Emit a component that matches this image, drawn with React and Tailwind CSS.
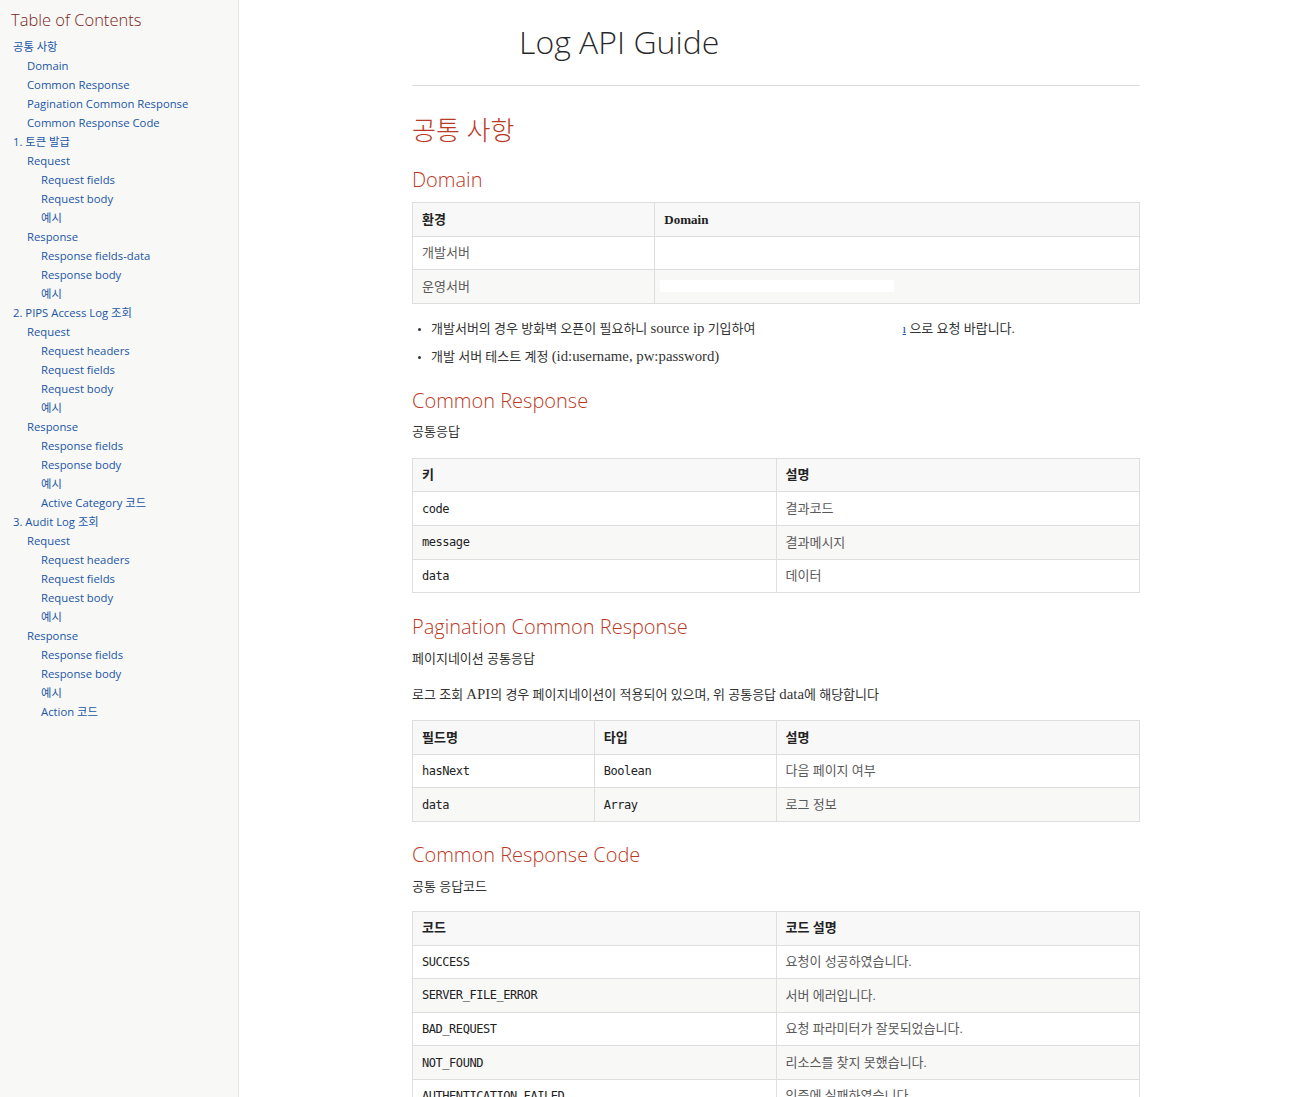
import React from "react"

const toc = [
  [1, "공통 사항"],
  [2, "Domain"],
  [2, "Common Response"],
  [2, "Pagination Common Response"],
  [2, "Common Response Code"],
  [1, "1. 토큰 발급"],
  [2, "Request"],
  [3, "Request fields"],
  [3, "Request body"],
  [3, "예시"],
  [2, "Response"],
  [3, "Response fields-data"],
  [3, "Response body"],
  [3, "예시"],
  [1, "2. PIPS Access Log 조회"],
  [2, "Request"],
  [3, "Request headers"],
  [3, "Request fields"],
  [3, "Request body"],
  [3, "예시"],
  [2, "Response"],
  [3, "Response fields"],
  [3, "Response body"],
  [3, "예시"],
  [3, "Active Category 코드"],
  [1, "3. Audit Log 조회"],
  [2, "Request"],
  [3, "Request headers"],
  [3, "Request fields"],
  [3, "Request body"],
  [3, "예시"],
  [2, "Response"],
  [3, "Response fields"],
  [3, "Response body"],
  [3, "예시"],
  [3, "Action 코드"],
]

const indent = { 1: "pl-[2px]", 2: "pl-[16px]", 3: "pl-[30px]" }

const sans = "font-['Open_Sans','Noto_Sans_CJK_KR',sans-serif]"
const serif = "font-['Liberation_Serif','Noto_Sans_CJK_KR',serif]"
const mono = "font-['DejaVu_Sans_Mono',monospace]"

// latin runs inside korean body text are set a touch larger, like the original serif
function L({ children }) {
  return <span className="text-[14.8px]">{children}</span>
}

function H3({ children, className = "" }) {
  return (
    <h3 className={`${sans} font-light text-[20px] leading-[28px] text-[#ba3925] ${className}`}>
      {children}
    </h3>
  )
}

const thCls = `${serif} h-[33.6px] px-[9px] text-left text-[13px] font-bold text-[#222] border border-[#dedede]`
const tdText = `${serif} h-[33.6px] px-[9px] text-[13px] text-[#5a5a5a] border border-[#dedede]`
const tdCode = `${mono} h-[33.6px] px-[9px] text-[12px] tracking-[-0.45px] text-[#222] border border-[#dedede]`

function Table({ head, rows, cols, codeCols = [0] }) {
  return (
    <table className="w-full border-collapse border border-[#dedede] table-fixed">
      <colgroup>
        {cols.map((w, i) => (
          <col key={i} className={w} />
        ))}
      </colgroup>
      <thead>
        <tr className="bg-[#f7f8f7]">
          {head.map((h, i) => (
            <th key={i} className={thCls}>
              {h}
            </th>
          ))}
        </tr>
      </thead>
      <tbody>
        {rows.map((r, ri) => (
          <tr key={ri} className={ri % 2 === 1 ? "bg-[#f8f8f7]" : "bg-white"}>
            {r.map((c, ci) => (
              <td key={ci} className={codeCols.includes(ci) ? tdCode : tdText}>
                {c}
              </td>
            ))}
          </tr>
        ))}
      </tbody>
    </table>
  )
}

export default function App() {
  return (
    <div className="flex h-[1097px] overflow-hidden bg-white">
      {/* sidebar toc */}
      <aside className="w-[239px] shrink-0 bg-[#f8f8f7] border-r border-[#e7e7e9] px-[11px] pt-[8px]">
        <div className={`${sans} font-light text-[16.5px] leading-[24px] text-[#7a2518]`}>Table of Contents</div>
        <ul className="mt-[5px]">
          {toc.map(([lvl, label], i) => (
            <li
              key={i}
              className={`${sans} ${indent[lvl]} text-[11.3px] leading-[19px] text-[#2156a5]`}
            >
              {label}
            </li>
          ))}
        </ul>
      </aside>

      {/* content */}
      <main className="ml-[173px] w-[728px] shrink-0">
        <div className="border-b border-[#dddddf] pt-[20px] pb-[21px]">
          <h1 className={`${sans} font-light text-[32px] leading-[44px] text-[#000000d9] pl-[107px]`}>
            Log API Guide
          </h1>
        </div>

        <h2 className={`${sans} font-light text-[26px] leading-[32px] text-[#ba3925] mt-[28px]`}>
          공통 사항
        </h2>

        <H3 className="mt-[20px]">Domain</H3>
        <div className="mt-[8px]">
          <table className="w-full border-collapse border border-[#dedede] table-fixed">
            <colgroup>
              <col className="w-1/3" />
              <col className="w-2/3" />
            </colgroup>
            <thead>
              <tr className="bg-[#f7f8f7]">
                <th className={thCls}>환경</th>
                <th className={thCls}>Domain</th>
              </tr>
            </thead>
            <tbody>
              <tr className="bg-white">
                <td className={tdText}>개발서버</td>
                <td className={tdText}></td>
              </tr>
              <tr className="bg-[#f8f8f7]">
                <td className={tdText}>운영서버</td>
                <td className={tdText}>
                  <span className="block -ml-[4px] w-[234px] h-[12px] bg-white"></span>
                </td>
              </tr>
            </tbody>
          </table>
        </div>

        <ul className={`${serif} list-disc pl-[19px] mt-[14px] text-[13px] leading-[20px] text-[#333] marker:text-[10px]`}>
          <li>
            개발서버의 경우 방화벽 오픈이 필요하니 <L>source ip</L> 기입하여
            <span className="inline-block w-[147px]"></span>
            <span className="text-[#2156a5] underline">ı</span> 으로 요청 바랍니다.
          </li>
          <li className="mt-[7px]">
            개발 서버 테스트 계정 <L>(id:username, pw:password)</L>
          </li>
        </ul>

        <H3 className="mt-[20px]">Common Response</H3>
        <p className={`${serif} mt-[7px] text-[13px] leading-[20px] text-[#333]`}>공통응답</p>
        <div className="mt-[16px]">
          <Table
            head={["키", "설명"]}
            cols={["w-1/2", "w-1/2"]}
            rows={[
              ["code", "결과코드"],
              ["message", "결과메시지"],
              ["data", "데이터"],
            ]}
          />
        </div>

        <H3 className="mt-[20px]">Pagination Common Response</H3>
        <p className={`${serif} mt-[8px] text-[13px] leading-[20px] text-[#333]`}>페이지네이션 공통응답</p>
        <p className={`${serif} mt-[15px] text-[13px] leading-[20px] text-[#333]`}>
          로그 조회 <L>API</L>의 경우 페이지네이션이 적용되어 있으며, 위 공통응답 <L>data</L>에 해당합니다
        </p>
        <div className="mt-[15px]">
          <Table
            head={["필드명", "타입", "설명"]}
            cols={["w-1/4", "w-1/4", "w-1/2"]}
            codeCols={[0, 1]}
            rows={[
              ["hasNext", "Boolean", "다음 페이지 여부"],
              ["data", "Array", "로그 정보"],
            ]}
          />
        </div>

        <H3 className="mt-[19px]">Common Response Code</H3>
        <p className={`${serif} mt-[8px] text-[13px] leading-[20px] text-[#333]`}>공통 응답코드</p>
        <div className="mt-[14px]">
          <Table
            head={["코드", "코드 설명"]}
            cols={["w-1/2", "w-1/2"]}
            rows={[
              ["SUCCESS", "요청이 성공하였습니다."],
              ["SERVER_FILE_ERROR", "서버 에러입니다."],
              ["BAD_REQUEST", "요청 파라미터가 잘못되었습니다."],
              ["NOT_FOUND", "리소스를 찾지 못했습니다."],
              ["AUTHENTICATION_FAILED", "인증에 실패하였습니다."],
            ]}
          />
        </div>
      </main>
    </div>
  )
}
